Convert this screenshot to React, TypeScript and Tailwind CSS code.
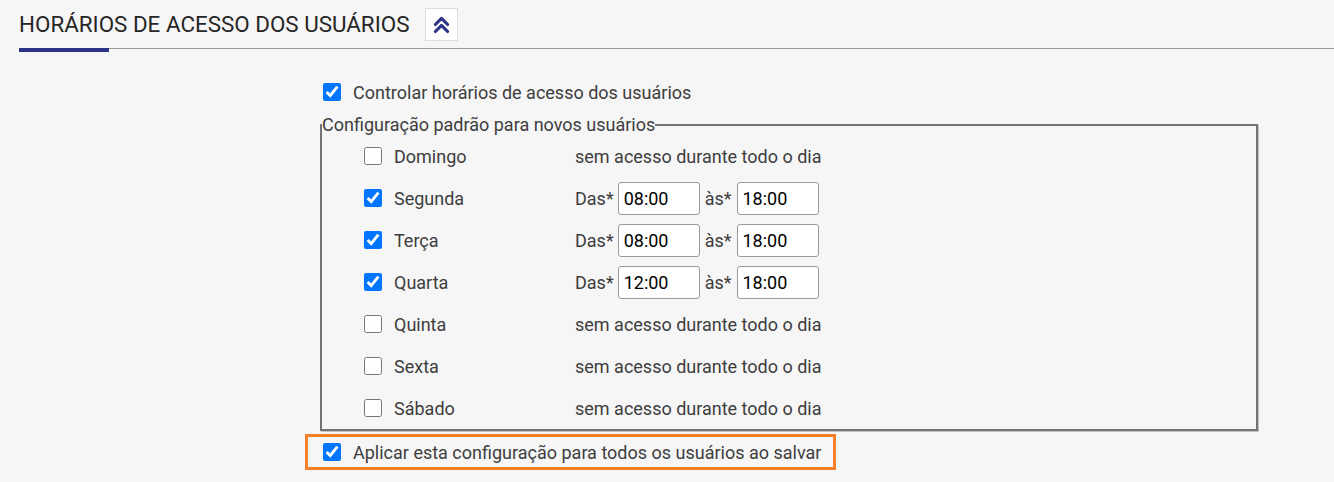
import React from "react";

const font = { fontFamily: "Roboto, 'Liberation Sans', sans-serif" };

function Check({ checked }: { checked: boolean }) {
  return (
    <input
      type="checkbox"
      defaultChecked={checked}
      className="m-0 h-[18px] w-[18px] shrink-0 accent-[#0075ff]"
    />
  );
}

function TimeInput({ value }: { value: string }) {
  return (
    <input
      type="text"
      defaultValue={value}
      className="box-border h-[33px] w-[82px] rounded-[3px] border border-[#9a9a9a] bg-white pl-[5px] text-[18px] text-black outline-none"
      style={font}
    />
  );
}

type Day = { name: string; on: boolean; from?: string; to?: string };

const days: Day[] = [
  { name: "Domingo", on: false },
  { name: "Segunda", on: true, from: "08:00", to: "18:00" },
  { name: "Terça", on: true, from: "08:00", to: "18:00" },
  { name: "Quarta", on: true, from: "12:00", to: "18:00" },
  { name: "Quinta", on: false },
  { name: "Sexta", on: false },
  { name: "Sábado", on: false },
];

export default function App() {
  return (
    <div
      className="h-[482px] w-[1334px] overflow-hidden bg-[#f6f6f6] text-[18px] text-[#3d3d3d]"
      style={font}
    >
      {/* Header */}
      <div className="flex h-[48px] items-center pl-[19px]">
        <span className="text-[22.4px] leading-none text-[#262626]">
          HORÁRIOS DE ACESSO DOS USUÁRIOS
        </span>
        <button className="ml-[16px] flex h-[33px] w-[33px] items-center justify-center border border-[#dedede] bg-white">
          <svg width="21" height="21" viewBox="0 0 24 24" fill="none" stroke="#2d3388" strokeWidth="3.6" strokeLinecap="round" strokeLinejoin="round">
            <polyline points="5 12 12 5 19 12" />
            <polyline points="5 20 12 13 19 20" />
          </svg>
        </button>
      </div>
      <div className="flex items-start pl-[19px]">
        <div className="h-[4px] w-[90px] bg-[#2b3386]" />
        <div className="h-px flex-1 bg-[#9c9c9c]" />
      </div>

      {/* Body */}
      <div className="pl-[305px]">
        <div className="mt-[28px] flex h-[24px] items-center gap-[12px] pl-[18px]">
          <Check checked />
          <span>Controlar horários de acesso dos usuários</span>
        </div>

        <fieldset className="ml-[15px] mt-[11px] w-[938px] border-2 border-solid border-[#747474] px-0 pb-0 shadow-[1px_1px_0_#c4c4c4]">
          <legend className="p-0 text-[18px] leading-[20px]">
            Configuração padrão para novos usuários
          </legend>
          {days.map((d) => (
            <div key={d.name} className="flex h-[42px] items-center pl-[42px]">
              <Check checked={d.on} />
              <span className="ml-[12px] w-[181px]">{d.name}</span>
              {d.on ? (
                <div className="flex items-center">
                  <span>Das*</span>
                  <span className="ml-[4px]">
                    <TimeInput value={d.from!} />
                  </span>
                  <span className="ml-[5px]">às*</span>
                  <span className="ml-[5px]">
                    <TimeInput value={d.to!} />
                  </span>
                </div>
              ) : (
                <span>sem acesso durante todo o dia</span>
              )}
            </div>
          ))}
        </fieldset>

        <div className="mt-[3px] flex h-[36px] w-[531px] items-center gap-[12px] border-[3px] border-[#f5802a] pl-[15px]">
          <Check checked />
          <span>Aplicar esta configuração para todos os usuários ao salvar</span>
        </div>
      </div>
    </div>
  );
}
